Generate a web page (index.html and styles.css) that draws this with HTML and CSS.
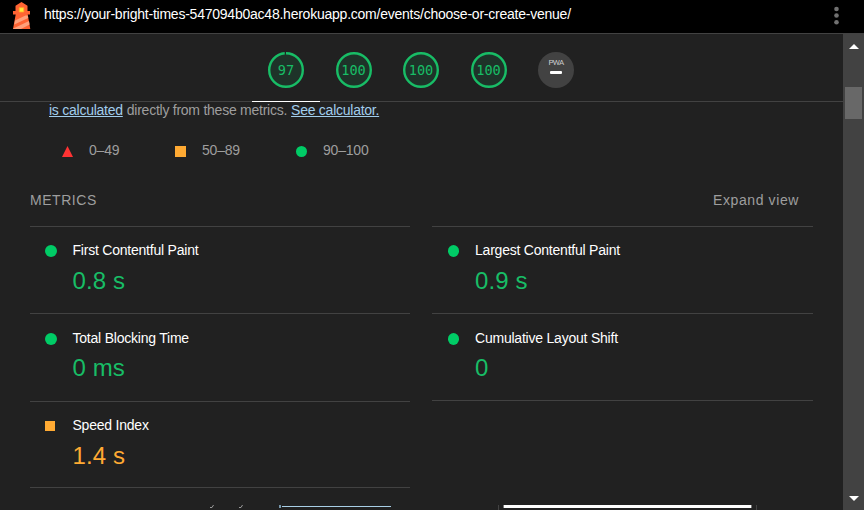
FILE: index.html
```html
<!DOCTYPE html>
<html lang="en">
<head>
<meta charset="utf-8">
<title>Lighthouse Report</title>
<link rel="stylesheet" href="styles.css">
</head>
<body>
<header class="topbar">
  <svg class="logo" width="20" height="28" viewBox="0 0 20 28">
    <path fill="#ff6433" d="M9.500 0 15.500 3.700V9H18v3.500h-2.300L18.300 27H1L3.700 12.500H1V9h2.500V3.700z"/>
    <path fill="#ffa07a" d="M3 18.500 13.500 13.500h2.300l.4 2.500L2.300 22.500zM1.300 26.500l15.700-7.500.6 3.500L9 27H1z"/>
    <path fill="#ffeb3b" stroke="#ffa52a" stroke-width=".8" d="M7.200 5.700h4.600v4.300H7.200z"/>
  </svg>
  <span class="url">https://your-bright-times-547094b0ac48.herokuapp.com/events/choose-or-create-venue/</span>
  <svg class="dots" width="6" height="20" viewBox="0 0 6 20" fill="#717171"><circle cx="2.500" cy="3" r="2.300"/><circle cx="2.500" cy="9.500" r="2.300"/><circle cx="2.500" cy="16.200" r="2.300"/></svg>
</header>
<div class="body">
  <main class="report">
    <nav class="gauges">
      <a class="gauge active"><svg width="36" height="36" viewBox="0 0 36 36"><circle cx="18" cy="18" r="16.800" class="disc"/><circle cx="18" cy="18" r="16.800" class="ring" stroke-dasharray="103.560 2" transform="rotate(-90 18 18)"/></svg><span class="score">97</span></a>
      <a class="gauge"><svg width="36" height="36" viewBox="0 0 36 36"><circle cx="18" cy="18" r="16.800" class="disc"/><circle cx="18" cy="18" r="16.800" class="ring"/></svg><span class="score">100</span></a>
      <a class="gauge"><svg width="36" height="36" viewBox="0 0 36 36"><circle cx="18" cy="18" r="16.800" class="disc"/><circle cx="18" cy="18" r="16.800" class="ring"/></svg><span class="score">100</span></a>
      <a class="gauge"><svg width="36" height="36" viewBox="0 0 36 36"><circle cx="18" cy="18" r="16.800" class="disc"/><circle cx="18" cy="18" r="16.800" class="ring"/></svg><span class="score">100</span></a>
      <a class="gauge"><span class="pwa">PWA<i></i></span></a>
    </nav>
    <p class="intro"><a>is calculated</a> <span>directly from these metrics.</span> <a>See calculator.</a></p>
    <div class="legend">
      <span class="range fail"><svg width="11" height="11" viewBox="0 0 11 11"><path d="M5.500 0 11 11H0z" fill="#f33"/></svg>0–49</span>
      <span class="range mid"><i class="square"></i>50–89</span>
      <span class="range pass"><i class="dot"></i>90–100</span>
    </div>
    <div class="heading"><span class="title">METRICS</span><span class="expand">Expand view</span></div>
    <div class="metrics">
      <div class="column">
        <section class="metric"><i class="dot"></i><div><h3>First Contentful Paint</h3><b>0.8 s</b></div></section>
        <section class="metric second"><i class="dot"></i><div><h3>Total Blocking Time</h3><b>0 ms</b></div></section>
        <section class="metric average last"><i class="square"></i><div><h3>Speed Index</h3><b>1.4 s</b></div></section>
      </div>
      <div class="column">
        <section class="metric"><i class="dot"></i><div><h3>Largest Contentful Paint</h3><b>0.9 s</b></div></section>
        <section class="metric second last"><i class="dot"></i><div><h3>Cumulative Layout Shift</h3><b>0</b></div></section>
      </div>
    </div>
    <div class="next">
      <svg width="843" height="5" viewBox="0 0 843 5">
        <path d="M210 2.500h2l1.500-2.500M239 2.500h2l1.500-2.500" stroke="#999" fill="none"/>
        <path d="M279 0h2v3h-2z" fill="#7594a8"/><path d="M282 1h109v1H282z" fill="#a9cfe6"/>
        <path d="M498 0h1v5h-1zM756 0h1v5h-1z" fill="#424242"/>
        <path d="M503 0h249v3H503z" fill="#777"/><path d="M504 0h247v3H504z" fill="#fff"/>
      </svg>
    </div>
  </main>
  <aside class="scrollbar">
    <svg width="10" height="5" viewBox="0 0 10 5"><path d="M5 0 10 5H0z" fill="#fff"/></svg>
    <i class="thumb"></i>
    <svg width="10" height="5" viewBox="0 0 10 5"><path d="M0 0h10L5 5z" fill="#fff"/></svg>
  </aside>
</div>
</body>
</html>
```

FILE: styles.css
```css
* { box-sizing: border-box; }
body { margin: 0; height: 510px; overflow: hidden; background: #212121; color: #9e9e9e; font: 14px/20px "Liberation Sans", Arial, sans-serif; }
.topbar { display: flex; height: 34px; padding-left: 12px; background: #000; border-bottom: 1px solid #424242; color: #fff; }
.logo { margin-top: 2px; }
.url { margin: 4px 0 0 12px; width: 780px; white-space: nowrap; letter-spacing: -.235px; }
.dots { margin: 6px 0 0 10px; }
.body { display: flex; height: 476px; }
.report { width: 843px; display: flex; flex-direction: column; }
.gauges { display: flex; flex: none; height: 68px; padding-left: 252px; border-bottom: 1px solid #424242; }
.gauge { position: relative; width: 67.500px; height: 68px; padding: 18px 0 0 16px; }
.gauge svg { display: block; }
.active { border-bottom: 1px solid #fff; }
.disc { fill: #1e3329; }
.ring { fill: none; stroke: #18bd66; stroke-width: 2.400; }
.score { position: absolute; left: 16px; top: 26px; width: 36px; text-align: center; font: 13.600px/20px "DejaVu Sans Mono", monospace; color: #18bd66; }
.pwa { display: flex; flex-direction: column; align-items: center; width: 36px; height: 36px; padding-top: 6px; border-radius: 50%; background: #424242; color: #ccc; font: 8px/9px Roboto, sans-serif; letter-spacing: -.8px; }
.pwa i { width: 12px; height: 3px; margin-top: 4px; border-radius: 1px; background: #fff; }
.intro { display: flex; gap: 4px; margin: 0; padding-left: 49px; height: 19px; line-height: 16px; white-space: nowrap; letter-spacing: -.25px; }
.intro a { color: #a1cdec; text-decoration: underline; }
.legend { display: flex; height: 59px; padding: 19px 0 0 62px; letter-spacing: -.2px; }
.range { display: flex; height: 20px; align-items: center; }
.range svg, .range i { margin-right: 16px; position: relative; top: 1px; }
.fail { width: 113px; }
.mid { width: 121px; }
.dot { width: 11px; height: 11px; border-radius: 50%; background: #0c6; }
.square { width: 11px; height: 11px; background: #fa3; }
.heading { display: flex; justify-content: space-between; height: 46px; padding: 10px 44px 0 30px; }
.title { letter-spacing: .55px; }
.expand { letter-spacing: .6px; }
.metrics { display: grid; grid-template-columns: 380px 381px; column-gap: 22px; padding-left: 30px; height: 279px; flex: none; }
.metric { display: flex; height: 87px; padding: 13px 0 0 15px; border-top: 1px solid #424242; }
.metric i { flex: none; width: 12px; height: 12px; margin: 5px 15.500px 0 0; }
.metric .square { width: 10px; height: 10px; margin: 6px 17.500px 0 0; }
.column + .column .dot { width: 11.500px; margin: 5px 16px 0 .500px; }
.metric h3 { margin: 0; font-size: 14px; font-weight: 400; line-height: 20px; letter-spacing: -.22px; color: #fff; white-space: nowrap; }
.metric b { display: block; margin-top: 6px; font-size: 24px; font-weight: 400; line-height: 30px; letter-spacing: .1px; color: #18bd66; }
.second { height: 88px; padding-top: 14px; }
.second b { margin-top: 5px; }
.average b { margin-top: 6px; color: #fa3; }
.last { height: 87px; border-bottom: 1px solid #424242; }
.second.last { height: 88px; }
.next { flex: none; height: 5px; }
.next svg { display: block; }
.scrollbar { display: flex; flex-direction: column; align-items: center; width: 21px; padding: 10px 0 9px; background: #424242; }
.thumb { width: 17px; height: 32px; margin: 38px 0 auto; background: #686868; }
```
